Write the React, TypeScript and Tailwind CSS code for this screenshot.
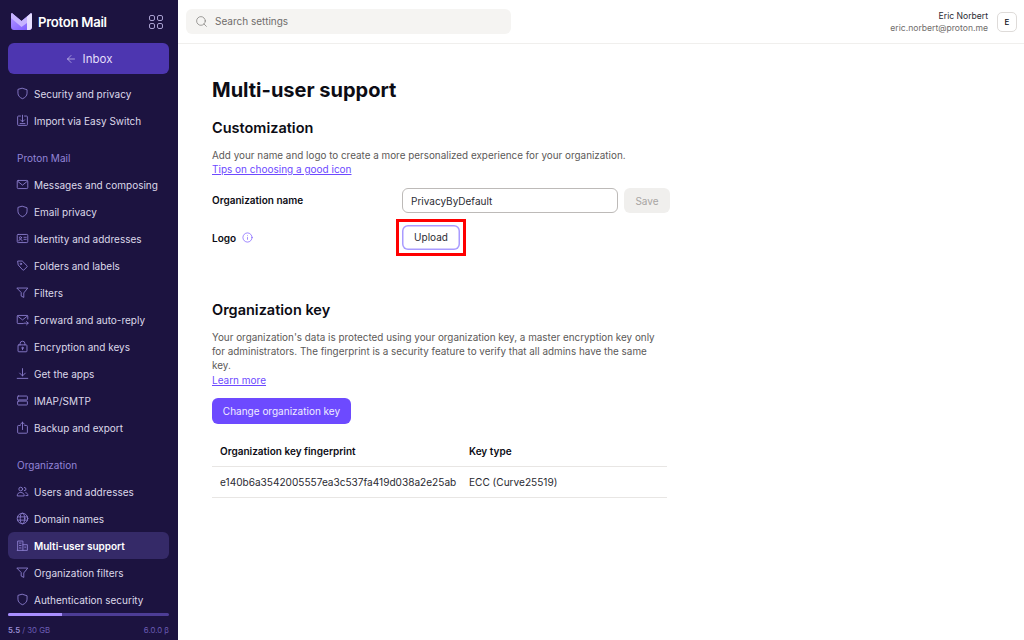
import React from "react";
import { ArrowLeft, Search, Info } from "lucide-react";

const Svg = ({ children }: { children: React.ReactNode }) => (
  <svg width="13" height="13" viewBox="0 0 16 16" fill="none" stroke="currentColor" strokeWidth="1.1" strokeLinecap="round" strokeLinejoin="round" className="shrink-0">
    {children}
  </svg>
);

const ShieldI = () => <Svg><path d="M8 1.6 13.6 3.4v4.2c0 3.3-2.4 5.6-5.6 6.8C4.8 13.2 2.4 10.9 2.4 7.600V3.400Z" /></Svg>;
const ImportI = () => <Svg><path d="M5.500 2.500H3a1 1 0 0 0-1 1V13a1 1 0 0 0 1 1h10a1 1 0 0 0 1-1V3.500a1 1 0 0 0-1-1h-2.500" /><path d="M8 1.500v8M5.500 7.200 8 9.700l2.500-2.500M5 11.800h6" /></Svg>;
const MailI = () => <Svg><rect x="1.500" y="3" width="13" height="10" rx="1.200" /><path d="m2 4 6 4.800L14 4" /></Svg>;
const IdI = () => <Svg><rect x="1.500" y="3" width="13" height="10" rx="1.200" /><circle cx="5.500" cy="7" r="1.300" /><path d="M3.500 11c.2-1.400 1-2 2-2s1.800.6 2 2M9.800 6.500h2.800M9.800 9h2.800" /></Svg>;
const TagI = () => <Svg><path d="M2.500 2.500h5.200l5.800 5.800a1 1 0 0 1 0 1.400l-3.800 3.800a1 1 0 0 1-1.400 0L3 7.700Z" /><circle cx="6" cy="6" r=".9" /></Svg>;
const FilterI = () => <Svg><path d="M1.500 2.500h13L9.600 8.500v5.500l-3.200-1.600V8.500Z" /></Svg>;
const ForwardI = () => <Svg><path d="M14.500 7.500V4a1 1 0 0 0-1-1h-11a1 1 0 0 0-1 1v8a1 1 0 0 0 1 1h6.500" /><path d="m2 3.800 6 4.700 6-4.700M10 12.500h5M13 10.500l2 2-2 2" /></Svg>;
const LockI = () => <Svg><rect x="2.500" y="6" width="11" height="8.500" rx="1" /><path d="M5 6V4.500a3 3 0 0 1 6 0V6" /><circle cx="8" cy="9.800" r=".9" /><path d="M8 10.500V12" /></Svg>;
const DownI = () => <Svg><path d="M8 2v9M4.500 7.500 8 11l3.500-3.500M1.500 14h13" /></Svg>;
const ServerI = () => <Svg><rect x="2" y="2.500" width="12" height="4.800" rx=".8" /><rect x="2" y="8.700" width="12" height="4.800" rx=".8" /></Svg>;
const ExportI = () => <Svg><path d="M5.200 5.500H3a1 1 0 0 0-1 1V14a1 1 0 0 0 1 1h10a1 1 0 0 0 1-1V6.500a1 1 0 0 0-1-1h-2.200" /><path d="M8 10.500V1.500M5.500 4 8 1.500 10.500 4" /></Svg>;
const UsersI = () => <Svg><circle cx="5.800" cy="5" r="2.300" /><path d="M1.500 13c0-2.500 1.800-3.800 4.300-3.800s4.300 1.300 4.300 3.800ZM10.300 3a2 2 0 0 1 0 4M12 9.500c1.600.3 2.700 1.500 2.700 3.500h-2.500" /></Svg>;
const GlobeI = () => <Svg><circle cx="8" cy="8" r="6.500" /><ellipse cx="8" cy="8" rx="2.800" ry="6.500" /><path d="M1.800 6h12.400M1.800 10h12.400" /></Svg>;
const OrgI = () => <Svg><path d="M2 14V2.500h6.500V14M8.500 7H14v7H1.500M4.200 5h2M4.200 8h2M4.200 11h2M10.700 10h1.300" /></Svg>;

type Item = { icon: React.ReactNode; label: string; active?: boolean };

const NavRow = ({ icon, label, active }: Item) => (
  <div className={`h-[27px] shrink-0 rounded-[6px] flex items-center gap-[5px] pl-[8px] ${active ? "bg-[#352a68] text-white font-semibold" : "text-[#dcd9ea]"}`}>
    <span className="text-[#8c7fd0] flex w-[13px] justify-center">{icon}</span>
    <span>{label}</span>
  </div>
);

const Section = ({ label }: { label: string }) => (
  <div className="h-[27px] shrink-0 flex items-center pl-[9px] text-[#9385d8] mt-[10px]">{label}</div>
);

const group1: Item[] = [
  { icon: <MailI />, label: "Messages and composing" },
  { icon: <ShieldI />, label: "Email privacy" },
  { icon: <IdI />, label: "Identity and addresses" },
  { icon: <TagI />, label: "Folders and labels" },
  { icon: <FilterI />, label: "Filters" },
  { icon: <ForwardI />, label: "Forward and auto-reply" },
  { icon: <LockI />, label: "Encryption and keys" },
  { icon: <DownI />, label: "Get the apps" },
  { icon: <ServerI />, label: "IMAP/SMTP" },
  { icon: <ExportI />, label: "Backup and export" },
];

const group2: Item[] = [
  { icon: <UsersI />, label: "Users and addresses" },
  { icon: <GlobeI />, label: "Domain names" },
  { icon: <OrgI />, label: "Multi-user support", active: true },
  { icon: <FilterI />, label: "Organization filters" },
  { icon: <ShieldI />, label: "Authentication security" },
];

const Logo = () => (
  <svg width="21" height="17" viewBox="0 0 21 17" className="shrink-0">
    <defs>
      <linearGradient id="lg" x1="0" y1="0" x2="0.8" y2="1">
        <stop offset="0" stopColor="#b79cff" />
        <stop offset="1" stopColor="#7d5cff" />
      </linearGradient>
    </defs>
    <path d="M0 1.500C0 .5 1 0 1.800 .7L10.500 8 19.200 .7C20 0 21 .5 21 1.500V14C21 15.700 19.700 17 18 17H3C1.300 17 0 15.700 0 14Z" fill="url(#lg)" />
    <path d="M0 1.500C0 .5 1 0 1.800 .7L10.500 8 16 3.400V10L10.500 14 0 5Z" fill="#c6b3ff" />
    <path d="M16 3.400 19.200 .7C20 0 21 .5 21 1.500V14C21 15.700 19.700 17 18 17H16Z" fill="#e6deff" />
  </svg>
);

export default function App() {
  return (
    <div className="flex h-[640px] w-[1024px] overflow-hidden bg-white text-[10px] leading-[14px] text-[#0c0c14]" style={{ fontFamily: "Inter, 'Liberation Sans', sans-serif" }}>
      <aside className="w-[178px] shrink-0 bg-[#1c1340] flex flex-col pl-[8px] pr-[9px]">
        <div className="h-[43px] shrink-0 flex items-center justify-between pl-[3px] pr-[6px]">
          <div className="flex items-center gap-[6px]">
            <Logo />
            <span className="text-white text-[13.200px] font-semibold tracking-[-0.3px]">Proton Mail</span>
          </div>
          <div className="grid grid-cols-2 gap-[2px]">
            {[0, 1, 2, 3].map((i) => (
              <span key={i} className="w-[6px] h-[6px] rounded-[2px] border border-[#a9a0d0]" />
            ))}
          </div>
        </div>
        <div className="h-[31px] shrink-0 rounded-[6px] bg-[#4d36b0] flex items-center justify-center gap-[6px] text-[#e4dffa] text-[11.500px]">
          <ArrowLeft size={12} strokeWidth={1.2} />
          <span>Inbox</span>
        </div>
        <div className="flex-1 min-h-0 overflow-hidden flex flex-col mt-[6px]">
          <NavRow icon={<ShieldI />} label="Security and privacy" />
          <NavRow icon={<ImportI />} label="Import via Easy Switch" />
          <Section label="Proton Mail" />
          {group1.map((it) => <NavRow key={it.label} {...it} />)}
          <Section label="Organization" />
          {group2.map((it) => <NavRow key={it.label} {...it} />)}
        </div>
        <div className="shrink-0 h-[27px] flex flex-col">
          <div className="h-[3px] rounded-full bg-[#4d3d96] overflow-hidden">
            <div className="h-full w-[54px] bg-[#a98fff]" />
          </div>
          <div className="flex justify-between items-center mt-[7px] text-[7.800px] text-[#6b5cb4]">
            <span><b className="text-[#9c90d6] font-semibold">5.5</b> / 30 GB</span>
            <span>6.0.0 β</span>
          </div>
        </div>
      </aside>

      <main className="flex-1 min-w-0 flex flex-col">
        <header className="h-[44px] shrink-0 border-b border-[#f0efed] flex items-center justify-between pl-[8px] pr-[7px]">
          <div className="w-[325px] h-[25px] rounded-[6px] bg-[#f5f4f2] flex items-center gap-[7px] pl-[9px] text-[#706d6b]">
            <Search size={13} strokeWidth={1.200} />
            <span className="-mt-px">Search settings</span>
          </div>
          <div className="flex items-center gap-[9px] mt-px">
            <div className="text-right text-[8.600px] leading-[12px]">
              <div className="text-[#2b2b33]">Eric Norbert</div>
              <div className="text-[#706d6b]">eric.norbert@proton.me</div>
            </div>
            <div className="w-[20px] h-[20px] rounded-[5px] border border-[#dedbd9] flex items-center justify-center text-[8px] font-medium">E</div>
          </div>
        </header>

        <div className="flex-1 pl-[34px] flex flex-col items-start">
          <h1 className="text-[20px] leading-[28px] font-bold mt-[32px]">Multi-user support</h1>
          <h2 className="text-[14.500px] leading-[20px] font-semibold mt-[14px]">Customization</h2>
          <p className="text-[#5c5958] mt-[10px] w-[455px] text-[9.900px]">Add your name and logo to create a more personalized experience for your organization.</p>
          <a className="text-[#6d4aff] underline">Tips on choosing a good icon</a>

          <div className="flex items-center mt-[12px] h-[25px]">
            <span className="w-[190px] font-semibold -mt-px">Organization name</span>
            <div className="w-[216px] h-[25px] rounded-[6px] border border-[#bdbab8] flex items-center pl-[8px] text-[#2b2b33]">PrivacyByDefault</div>
            <div className="ml-[6px] w-[46px] h-[25px] rounded-[6px] bg-[#f0efed] flex items-center justify-center text-[#a8a5a3]">Save</div>
          </div>

          <div className="flex items-center mt-[12px] h-[25px]">
            <span className="w-[190px] font-semibold flex items-center gap-[6px]">
              Logo
              <Info size={11} strokeWidth={1.400} className="text-[#6d4aff]" />
            </span>
            <div className="relative">
              <div className="w-[58px] h-[25px] rounded-[6px] shadow-[inset_0_0_0_1.5px_#a99bff] flex items-center justify-center text-[#2b2b33]">
                <span className="-mt-px">Upload</span>
              </div>
              <div className="absolute -left-[6px] -top-[6px] w-[70px] h-[37px] border-[3px] border-[#ff0000]" />
            </div>
          </div>

          <h2 className="text-[14.500px] leading-[20px] font-semibold mt-[50px]">Organization key</h2>
          <p className="text-[#5c5958] mt-[10px] w-[455px] text-[9.900px]">Your organization's data is protected using your organization key, a master encryption key only for administrators. The fingerprint is a security feature to verify that all admins have the same key.</p>
          <a className="text-[#6d4aff] underline mt-px">Learn more</a>

          <div className="mt-[11px] h-[26px] w-[139px] rounded-[6px] bg-[#6d4aff] text-[#f0ecff] flex items-center justify-center">Change organization key</div>

          <div className="mt-[13px] w-[455px]">
            <div className="flex h-[30px] items-center border-b border-[#e8e6e4] pl-[8px] font-semibold">
              <span className="w-[249px] -mt-px">Organization key fingerprint</span>
              <span className="-mt-px">Key type</span>
            </div>
            <div className="flex h-[31px] items-center border-b border-[#e8e6e4] pl-[8px] text-[#2b2b33] text-[10.080px]">
              <span className="w-[249px]">e140b6a3542005557ea3c537fa419d038a2e25ab</span>
              <span>ECC (Curve25519)</span>
            </div>
          </div>
        </div>
      </main>
    </div>
  );
}
